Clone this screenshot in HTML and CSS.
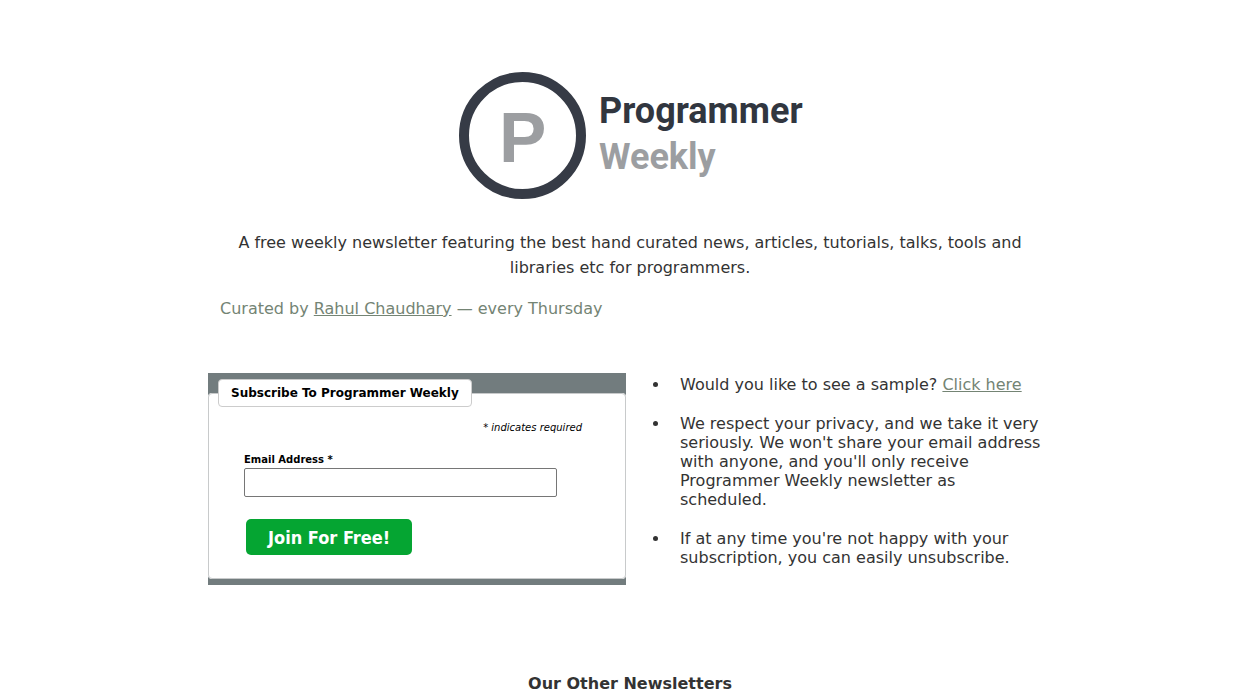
FILE: index.html
```html
<!DOCTYPE html>
<html lang="en">
<head>
<meta charset="utf-8">
<meta name="viewport" content="width=device-width, initial-scale=1">
<title>Programmer Weekly</title>
<link rel="stylesheet" href="styles.css">
</head>
<body>
<main class="page">
  <header class="intro">
    <svg class="logo" viewBox="0 0 346 130" role="img" aria-label="Programmer Weekly">
      <circle class="logo-ring" cx="65.5" cy="65.5" r="58.5"/>
      <text class="logo-letter" x="42" y="92">P</text>
      <text class="logo-name" x="142" y="53">Programmer</text>
      <text class="logo-name logo-weekly" x="142" y="99">Weekly</text>
    </svg>
    <p class="tagline">A free weekly newsletter featuring the best hand curated news, articles, tutorials, talks, tools and libraries etc for programmers.</p>
    <p class="curator">Curated by <a href="#curator">Rahul Chaudhary</a> — every Thursday</p>
  </header>
  <section class="signup">
    <div class="panel">
      <form>
        <fieldset class="card">
          <legend class="card-title">Subscribe To Programmer Weekly</legend>
          <p class="required">* indicates required</p>
          <label class="label" for="email">Email Address *</label>
          <input class="field" id="email" type="email" name="email">
          <button class="join" type="submit">Join For Free!</button>
        </fieldset>
      </form>
    </div>
    <ul class="notes">
      <li>Would you like to see a sample? <a href="#sample">Click here</a></li>
      <li>We respect your privacy, and we take it very seriously. We won't share your email address with anyone, and you'll only receive Programmer Weekly newsletter as scheduled.</li>
      <li>If at any time you're not happy with your subscription, you can easily unsubscribe.</li>
    </ul>
  </section>
  <h2 class="others">Our Other Newsletters</h2>
</main>
</body>
</html>
```
FILE: styles.css
```css
* {
  box-sizing: border-box;
}

body {
  margin: 0;
  background: #fff;
  color: #333;
  font: 16px/25px "DejaVu Sans", sans-serif;
}

a {
  color: #748474;
}

.page {
  max-width: 844px;
  margin: 0 auto;
  padding: 70px 0 0;
}

.intro {
  padding: 0 12px;
}

.logo {
  display: block;
  width: 346px;
  max-width: 100%;
  margin: 0 auto 30px;
}

.logo-ring {
  fill: none;
  stroke: #363b46;
  stroke-width: 10;
}

.logo-letter {
  fill: #9c9ea1;
  font: bold 71px "Liberation Sans", sans-serif;
}

.logo-name {
  fill: #31363f;
  font: bold 36px Roboto, sans-serif;
}

.logo-weekly {
  fill: #9c9ea1;
}

.tagline {
  margin: 0 0 16px;
  text-align: center;
}

.curator {
  margin: 0 0 52px;
  color: #748474;
}

.signup {
  display: grid;
  grid-template-columns: 1fr 1fr;
  column-gap: 8px;
  align-items: start;
}

.panel {
  padding: 6px 0;
  background: #727c7e;
}

.card {
  min-width: 0;
  margin: 0;
  padding: 13px 68px 23px 35px;
  border: 1px solid #c8cacb;
  border-radius: 4px;
  background: #fff;
}

.card-title {
  margin-left: -26px;
  padding: 0 12px;
  border: 1px solid #ccc;
  border-radius: 4px;
  background: #fff;
  color: #000;
  font-weight: bold;
  font-size: 12px;
  line-height: 26px;
}

.required {
  margin: 0 -25px 16px 0;
  color: #000;
  font-style: italic;
  font-size: 10px;
  line-height: 16px;
  text-align: right;
}

.label {
  display: block;
  color: #000;
  font-weight: bold;
  font-size: 10px;
  line-height: 16px;
}

.field {
  display: block;
  width: 100%;
  height: 29px;
  padding: 4px 8px;
  border: 1px solid #767676;
  border-radius: 2px;
  background: #fff;
}

.join {
  display: block;
  height: 36px;
  margin: 22px 0 0 2px;
  padding: 0 22px;
  border: 0;
  border-radius: 5px;
  background: #05a532;
  color: #fff;
  font: bold 18px "DejaVu Sans Condensed", "DejaVu Sans", sans-serif;
}

.notes {
  display: grid;
  gap: 20px;
  margin: 2px 8px 0 0;
  padding: 0 0 0 36px;
  line-height: 19px;
}

.notes li {
  padding-left: 10px;
}

.others {
  margin: 86px 0 0;
  font-size: 16px;
  line-height: 25px;
  text-align: center;
}
```
